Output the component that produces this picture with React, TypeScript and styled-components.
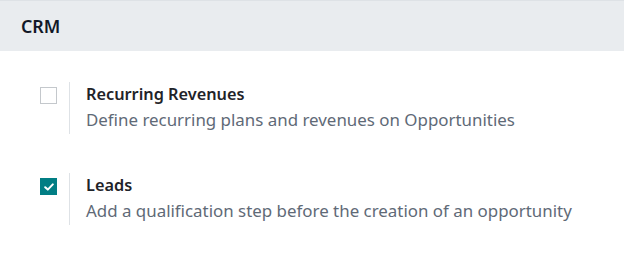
import React from "react";
import styled, { createGlobalStyle } from "styled-components";

const Global = createGlobalStyle`
  html, body { margin: 0; padding: 0; background: #ffffff; }
  body { font-family: "Noto Sans", "Open Sans", sans-serif; }
`;

const Page = styled.div`
  width: 624px;
  height: 267px;
  background: #fff;
`;

const Header = styled.div`
  height: 51px;
  box-sizing: border-box;
  background: #e9ecef;
  border-top: 1px solid #dee2e6;
  display: flex;
  align-items: center;
  padding-left: 21px;
  font-weight: 600;
  font-size: 17.8px;
  color: #111827;
`;

const List = styled.div`
  display: flex;
  flex-direction: column;
  gap: 39px;
  padding: 31px 0 0 40px;
`;

const Row = styled.div`
  display: flex;
  align-items: flex-start;
`;

const CheckCol = styled.div`
  width: 29px;
  padding-top: 5px;
`;

const Box = styled.div<{ $checked?: boolean }>`
  width: 17px;
  height: 17px;
  box-sizing: border-box;
  border: 1px solid ${(p) => (p.$checked ? "#017e84" : "#c4c8cc")};
  background: ${(p) => (p.$checked ? "#017e84" : "#fff")};
  display: flex;
  align-items: center;
  justify-content: center;
`;

const Content = styled.div`
  border-left: 1px solid #dee2e6;
  padding-left: 16px;
  display: flex;
  flex-direction: column;
  min-height: 52px;
`;

const Title = styled.div`
  font-weight: 600;
  font-size: 16.3px;
  line-height: 25px;
  color: #1f2329;
`;

const Desc = styled.div`
  font-size: 16.9px;
  line-height: 25px;
  color: #5f6a77;
`;

const Check = () => (
  <svg width="10" height="8" viewBox="0 0 10 8">
    <path d="M1.2 4.2 L3.8 6.6 L8.8 1.4" fill="none" stroke="#fff" strokeWidth="2" strokeLinecap="round" strokeLinejoin="round" />
  </svg>
);

const items = [
  { title: "Recurring Revenues", desc: "Define recurring plans and revenues on Opportunities", checked: false },
  { title: "Leads", desc: "Add a qualification step before the creation of an opportunity", checked: true },
];

export default function App() {
  return (
    <Page>
      <Global />
      <Header>CRM</Header>
      <List>
        {items.map((it) => (
          <Row key={it.title}>
            <CheckCol>
              <Box $checked={it.checked}>{it.checked && <Check />}</Box>
            </CheckCol>
            <Content>
              <Title>{it.title}</Title>
              <Desc>{it.desc}</Desc>
            </Content>
          </Row>
        ))}
      </List>
    </Page>
  );
}
